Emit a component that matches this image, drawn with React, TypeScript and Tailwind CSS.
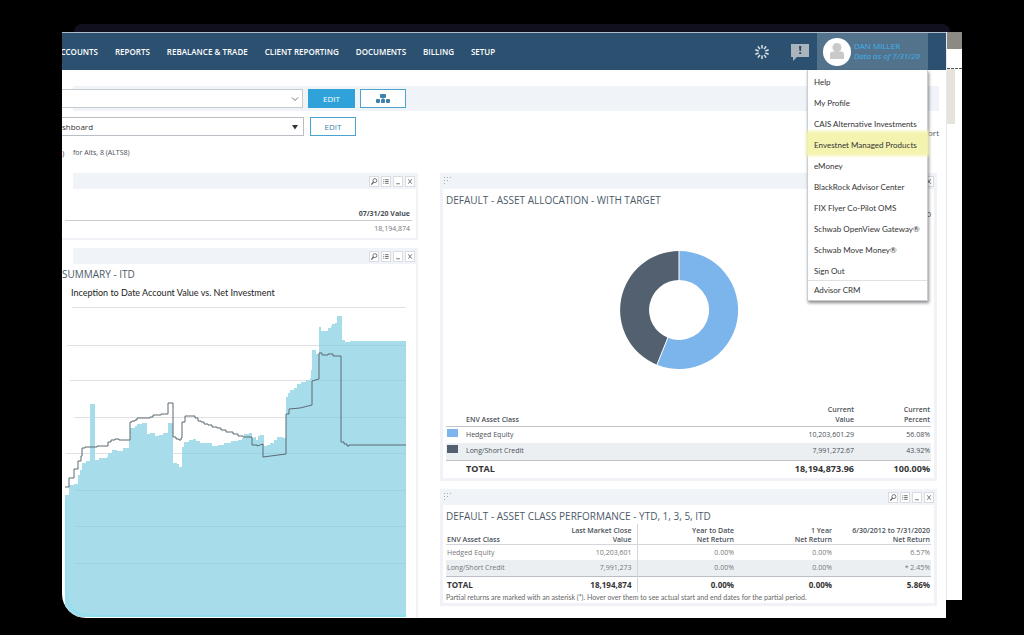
import React from "react";
import clsx from "clsx";

const navItems = [
  "CCOUNTS",
  "REPORTS",
  "REBALANCE & TRADE",
  "CLIENT REPORTING",
  "DOCUMENTS",
  "BILLING",
  "SETUP",
];

const menuItems = [
  "Help",
  "My Profile",
  "CAIS Alternative Investments",
  "Envestnet Managed Products",
  "eMoney",
  "BlackRock Advisor Center",
  "FIX Flyer Co-Pilot OMS",
  "Schwab OpenView Gateway®",
  "Schwab Move Money®",
  "Sign Out",
];

export default function App() {
  return (
    <div className="min-h-screen bg-black px-[62px] pt-6 font-['Open_Sans','Noto_Sans',sans-serif] text-[8px] text-[#4a4f57]">
      <div className="mx-3 h-2 rounded-t-lg bg-[#10101f]" />
      <div className="flex items-start">
        <main className="min-w-0 flex-1 overflow-hidden rounded-bl-3xl bg-white">
          <TopBar />
          <Toolbar />
          <div className="flex">
            <div className="w-[356px] shrink-0">
              <ValuePanel />
              <SummaryPanel />
            </div>
            <div className="ml-[22px] mr-[9px] flex-1 pb-3">
              <AllocationPanel />
              <PerformancePanel />
            </div>
          </div>
        </main>
        <SideStrip />
      </div>
    </div>
  );
}

const TopBar: React.FC = () => {
  return (
    <header className="flex h-[38px] items-center border-t border-[#aebccb] bg-[#2c5070] pr-[18px] text-white">
      <nav className="flex items-center gap-[17px] font-semibold whitespace-nowrap">
        {navItems.map((item, i) => (
          <a key={item} href="#nav" className={clsx(i === 0 && "flex w-9 justify-end")}>
            {item}
          </a>
        ))}
      </nav>
      <div className="ml-auto flex h-full items-center">
        <SpinnerIcon />
        <button aria-label="Messages" className="mr-2 ml-[21px]">
          <svg width="18" height="18" viewBox="0 0 18 18">
            <path d="M0 1h18v13H6l-4 4v-4H0z" fill="#a9b4bd" />
            <path d="M8 3h2.4l-.5 5H8.5zM8.2 9.300h2V11h-2z" fill="#33475a" />
          </svg>
        </button>
        <UserMenu />
      </div>
    </header>
  );
};

const SpinnerIcon: React.FC = () => {
  return (
    <svg width="16" height="16" viewBox="0 0 16 16" stroke="#dfe7ee" strokeWidth="1.5">
      {[0, 36, 72, 108, 144, 180, 216, 252, 288, 324].map((deg) => (
        <line key={deg} x1="8" y1="1" x2="8" y2="4.500" transform={`rotate(${deg} 8 8)`} />
      ))}
    </svg>
  );
};

const UserMenu: React.FC = () => {
  return (
    <div className="relative h-full w-[111px]">
      <button className="flex h-full w-full items-center gap-[3px] bg-[#53728c] pl-1.5 text-left text-[#3eb2ec]">
        <svg className="shrink-0" width="28" height="28" viewBox="0 0 28 28">
          <circle cx="14" cy="14" r="14" fill="#fff" />
          <circle cx="14" cy="9.500" r="4.500" fill="#c9c9c9" />
          <path d="M7 21v-4.500q0-3 3-3h8q3 0 3 3V21z" fill="#c9c9c9" />
        </svg>
        <span className="pb-0.5 leading-[10px] whitespace-nowrap">
          <span className="block">DAN MILLER</span>
          <span className="block italic">Data as of 7/31/20</span>
        </span>
      </button>
      <div className="absolute top-full right-0 z-10 w-[121px] border border-t-0 border-[#c9ccd2] bg-white font-['Lato','Open_Sans',sans-serif] text-[#333] shadow-[1px_2px_3px_rgba(0,0,0,0.45)]">
        {menuItems.map((item, i) => (
          <a
            key={item}
            href="#menu"
            className={clsx(
              "block h-[21px] pt-[5px] pl-1.5 leading-[14px] whitespace-nowrap",
              i === 3 && "bg-[#f5f3b0] shadow-[0_0_3px_2px_#f5f3b0]",
            )}
          >
            {item}
          </a>
        ))}
        <a
          href="#crm"
          className="block h-5 border-t border-[#dfe1e5] pt-0.5 pl-1.5 leading-[14px]"
        >
          Advisor CRM
        </a>
      </div>
    </div>
  );
};

const Toolbar: React.FC = () => {
  return (
    <div className="h-[103px] pt-4">
      <div className="mr-[7px] ml-[11px] bg-[#f0f4f8] py-[3px]">
        <div className="-ml-[11px] flex items-center">
          <div className="relative w-[241px]">
            <input
              aria-label="Account"
              className="block h-[19px] w-full border border-l-0 border-[#c6cbd0] bg-white"
            />
            <svg className="absolute top-1.5 right-1" width="8" height="8" viewBox="0 0 8 8">
              <path d="M1 2.500l3 3 3-3" fill="none" stroke="#777" />
            </svg>
          </div>
          <button className="ml-[5px] h-[19px] w-[47px] bg-[#2fa3d9] text-white">EDIT</button>
          <button
            aria-label="Hierarchy"
            className="ml-[5px] flex h-[19px] w-[46px] items-center justify-center border border-[#4ba3cf] bg-white"
          >
            <svg width="14" height="10" viewBox="0 0 14 10" fill="#3d80ad">
              <rect x="4" y="0" width="6" height="4" rx="1" />
              <path d="M6.500 4h1v1.500h-1z" />
              <rect x="0" y="5" width="4" height="4" rx="1" />
              <rect x="5" y="5" width="4" height="4" rx="1" />
              <rect x="10" y="5" width="4" height="4" rx="1" />
            </svg>
          </button>
        </div>
      </div>
      <div className="mt-1.5 flex h-[19px] items-center">
        <div className="relative w-[242px]">
          <select
            aria-label="Dashboard"
            className="block h-[19px] w-full appearance-none border border-l-0 border-[#b9bfc5] bg-white text-[#333]"
          >
            <option>shboard</option>
          </select>
          <svg
            className="pointer-events-none absolute top-[7px] right-1.5"
            width="6"
            height="6"
            viewBox="0 0 6 6"
          >
            <path d="M0 1h6L3 5.500z" fill="#333" />
          </svg>
        </div>
        <button className="ml-1.5 h-[19px] w-[46px] border border-[#4ba3cf] bg-white text-[#3d80ad]">
          EDIT
        </button>
        <a href="#export" className="mt-3 mr-[7px] ml-auto">
          Export
        </a>
      </div>
      <div className="mt-3 flex leading-[10px]">
        <span className="w-[11px]">)</span>
        <span className="text-[7px]">for Alts, 8 (ALTS8)</span>
      </div>
    </div>
  );
};

const PanelHeader: React.FC<{ grip?: boolean }> = ({ grip }) => {
  return (
    <div className="flex h-4 items-center bg-[#f0f4f8] pr-[3px] pl-1">
      {grip && (
        <svg width="8" height="8" viewBox="0 0 8 8" fill="#a4abb3">
          <path d="M0 0h1v1H0zM3 0h1v1H3zM6 0h1v1H6zM0 3h1v1H0zM3 3h1v1H3zM0 6h1v1H0z" />
        </svg>
      )}
      <div className="ml-auto flex gap-0.5">
        <PanelButton label="Settings">
          <circle cx="6" cy="4" r="2.200" />
          <path d="M4.500 5.500L2 8.500" strokeWidth="1.500" />
        </PanelButton>
        <PanelButton label="List">
          <path d="M2 3h1M4 3h4M2 5h1M4 5h4M2 7h1M4 7h4" />
        </PanelButton>
        <PanelButton label="Minimize">
          <path d="M3 7.500h4" />
        </PanelButton>
        <PanelButton label="Close">
          <path d="M3 2.500l4 5M7 2.500l-4 5" />
        </PanelButton>
      </div>
    </div>
  );
};

const PanelButton: React.FC<{ label: string; children: React.ReactNode }> = ({
  label,
  children,
}) => {
  return (
    <button aria-label={label} className="border border-[#d9dce0] bg-white">
      <svg width="8" height="9" viewBox="1 0 8 10" fill="none" stroke="#666">
        {children}
      </svg>
    </button>
  );
};

const ValuePanel: React.FC = () => {
  return (
    <section className="mb-2">
      <div className="ml-[11px]">
        <PanelHeader />
      </div>
      <div className="border-r-2 border-b-2 border-[#f0f2f7] pr-1 pl-[3px]">
        <table className="h-[49px] w-full text-right text-[7px] leading-[10px]">
          <thead>
            <tr className="border-b border-[#c9cdd2]">
              <th className="h-[31px] pr-0.5 pb-px align-bottom font-bold">07/31/20 Value</th>
            </tr>
          </thead>
          <tbody>
            <tr>
              <td className="pr-0.5 text-[#777]">18,194,874</td>
            </tr>
          </tbody>
        </table>
      </div>
    </section>
  );
};

// plot coordinates, drawn in the chart's own viewBox
const areaPath =
  "M65 617V495H69V485H74V484H78V475H80V470H82V463H86V461H90V404H95V460H99V458H107V457H108V453H112V450H117V451H123V448H129V440H130V428H135V426H137V424H142V423H147V434H150V433H155V436H159V435H163V433H168V423H173V463H177V464H179V467H182V447H184V442H189V440H193V439H196V441H200V443H212V446H218V445H224V443H231V441H238V440H242V438H244V434H249V433H252V438H254V437H256V440H258V436H260V435H264V446H267V445H270V443H274V440H277V437H283V438H286V397H288V393H290V390H294V388H297V384H301V382H306V380H310V378H311V370H312V350H316V354H319V327H321V331H328V328H331V326H332V324H335V323H337V316H342V340H345V342H350V341H406V617Z";

const linePath =
  "M65 487H69V478H74V469H78V461H81V456H82V448H85V447H97V446H108V442H111V440H115V439H119V440H130V422H132V421H135V420H137V418H150V417H153V415H161V414H168V403H173V437H176V439H179V440H181V438H182V422H185V416H195V418H198V421H201V422H204V424H208V425H212V427H217V428H221V430H226V432H233V434H238V436H243V437H252V445H257V446L263 444V457L286 454V414H289V409L300 408L312 405V381L319 379V353H322V355H328V354H333V356H341V442H344V444H347V446H349V445H406";

const SummaryPanel: React.FC = () => {
  return (
    <section>
      <div className="ml-[11px]">
        <PanelHeader />
      </div>
      <div className="border-r-2 border-[#f0f2f7]">
        <h2 className="pt-0.5 text-[10px] leading-4 text-[#4c5b69]">SUMMARY - ITD</h2>
        <h3 className="mt-[3px] pl-[9px] font-['Lato','Open_Sans',sans-serif] text-[9px] leading-4 text-[#222]">
          Inception to Date Account Value vs. Net Investment
        </h3>
        <svg className="block" width="344" height="317" viewBox="62 301 344 317">
          <path
            d="M72 307.500H407M67 345.500H407M70 380.500H407M74 417.500H407M66 453.500H407"
            stroke="#dfe1e3"
          />
          <path d={areaPath} fill="#a7dcea" />
          <path
            d="M319 345.500H406M313 380.500H406M287 417.500H406M182 453.500H406M75 490.500H406M75 526.500H406M75 563.500H406"
            stroke="#9dd2e1"
          />
          <path d={linePath} fill="none" stroke="#5c6b73" />
          <path d="M66 500V590Q66 616 92 616H406" fill="none" stroke="#8fdff0" strokeWidth="2" />
        </svg>
      </div>
    </section>
  );
};

const AllocationPanel: React.FC = () => {
  return (
    <section className="mb-2">
      <PanelHeader grip />
      <div className="border-x-[3px] border-b-[3px] border-[#f0f2f7] px-[3px]">
        <h2 className="pt-[3px] text-[10px] leading-4 text-[#4c5b69]">
          DEFAULT - ASSET ALLOCATION - WITH TARGET
        </h2>
        <p className="text-right">20</p>
        <div className="mt-[30px] flex justify-center pr-5">
          <svg width="120" height="120" viewBox="-60 -60 120 120">
            <path d="M0-59A59 59 0 1 1-22 54.700L-11.200 27.800A30 30 0 1 0 0-30Z" fill="#7cb5ec" />
            <path d="M0-59A59 59 0 0 0-22 54.700L-11.200 27.800A30 30 0 0 1 0-30Z" fill="#52606f" />
            <path d="M0-60V-29M-22.400 55.600L-10.800 26.800" stroke="#fff" />
          </svg>
        </div>
        <table className="mt-[34px] w-full table-fixed text-right text-[7px] leading-[10px]">
          <thead>
            <tr className="h-[22px] border-b border-[#c0c5ca] align-bottom">
              <th className="w-5" />
              <th className="pb-px text-left font-semibold">ENV Asset Class</th>
              <th className="w-[90px] pb-px font-semibold">
                Current
                <br />
                Value
              </th>
              <th className="w-[77px] pr-px pb-px font-semibold">
                Current
                <br />
                Percent
              </th>
            </tr>
          </thead>
          <tbody>
            <tr className="h-[17px]">
              <td>
                <div className="mb-1 ml-px h-2 w-[11px] bg-[#7cb5ec]" />
              </td>
              <td className="text-left">Hedged Equity</td>
              <td>10,203,601.29</td>
              <td className="pr-px">56.08%</td>
            </tr>
            <tr className="h-[17px] border-b border-[#c0c5ca] bg-[#ebeff2]">
              <td>
                <div className="mb-1 ml-px h-2 w-[11px] bg-[#52606f]" />
              </td>
              <td className="text-left">Long/Short Credit</td>
              <td>7,991,272.67</td>
              <td className="pr-px">43.92%</td>
            </tr>
            <tr className="h-[18px] text-[9px] font-bold text-[#333]">
              <td />
              <td className="text-left">TOTAL</td>
              <td>18,194,873.96</td>
              <td className="pr-px">100.00%</td>
            </tr>
          </tbody>
        </table>
      </div>
    </section>
  );
};

const performance = [
  ["Hedged Equity", "10,203,601", "0.00%", "0.00%", "6.57%"],
  ["Long/Short Credit", "7,991,273", "0.00%", "0.00%", "* 2.45%"],
];

const PerformancePanel: React.FC = () => {
  return (
    <section>
      <PanelHeader grip />
      <div className="border-x-[3px] border-b-[3px] border-[#f0f2f7] px-[3px] pb-px">
        <h2 className="pt-[3px] text-[10px] leading-4 text-[#4c5b69]">
          DEFAULT - ASSET CLASS PERFORMANCE - YTD, 1, 3, 5, ITD
        </h2>
        <table className="w-full table-fixed text-right text-[7px] leading-[9px]">
          <thead>
            <tr className="h-5 border-b border-[#d3d7db] align-bottom">
              <th className="pl-px text-left font-semibold">ENV Asset Class</th>
              <th className="w-[98px] border-r border-[#d3d7db] pr-[5px] font-semibold">
                Last Market Close
                <br />
                Value
              </th>
              <th className="w-[100px] pr-[3px] font-semibold">
                Year to Date
                <br />
                Net Return
              </th>
              <th className="w-[98px] pr-[3px] font-semibold">
                1 Year
                <br />
                Net Return
              </th>
              <th className="w-[96px] pr-px font-semibold">
                6/30/2012 to 7/31/2020
                <br />
                Net Return
              </th>
            </tr>
          </thead>
          <tbody className="text-[#777]">
            {performance.map((row, i) => (
              <tr
                key={row[0]}
                className={clsx("h-4", i === 1 && "border-b border-[#b9bfc5] bg-[#ebeff2]")}
              >
                <td className="pl-px text-left">{row[0]}</td>
                <td className="border-r border-[#d3d7db] pr-[5px]">{row[1]}</td>
                <td className="pr-[3px]">{row[2]}</td>
                <td className="pr-[3px]">{row[3]}</td>
                <td className="pr-px">{row[4]}</td>
              </tr>
            ))}
            <tr className="h-4 text-[8px] font-bold text-[#333]">
              <td className="pl-px text-left">TOTAL</td>
              <td className="border-r border-[#d3d7db] pr-[5px]">18,194,874</td>
              <td className="pr-[3px]">0.00%</td>
              <td className="pr-[3px]">0.00%</td>
              <td className="pr-px">5.86%</td>
            </tr>
          </tbody>
        </table>
        <p className="font-['Lato','Open_Sans',sans-serif] text-[7px] leading-[10px] text-[#666]">
          Partial returns are marked with an asterisk (*). Hover over them to see actual start and
          end dates for the partial period.
        </p>
      </div>
    </section>
  );
};

const SideStrip: React.FC = () => {
  return (
    <div className="h-[568px] w-4 border-l border-[#e6e9f0] bg-white">
      <div className="h-[17px] bg-[#8b8b84]" />
      <div className="h-5 border-b border-dashed border-[#555]" />
      <div className="h-[55px] w-2 bg-[#e6e3dc]" />
    </div>
  );
};
